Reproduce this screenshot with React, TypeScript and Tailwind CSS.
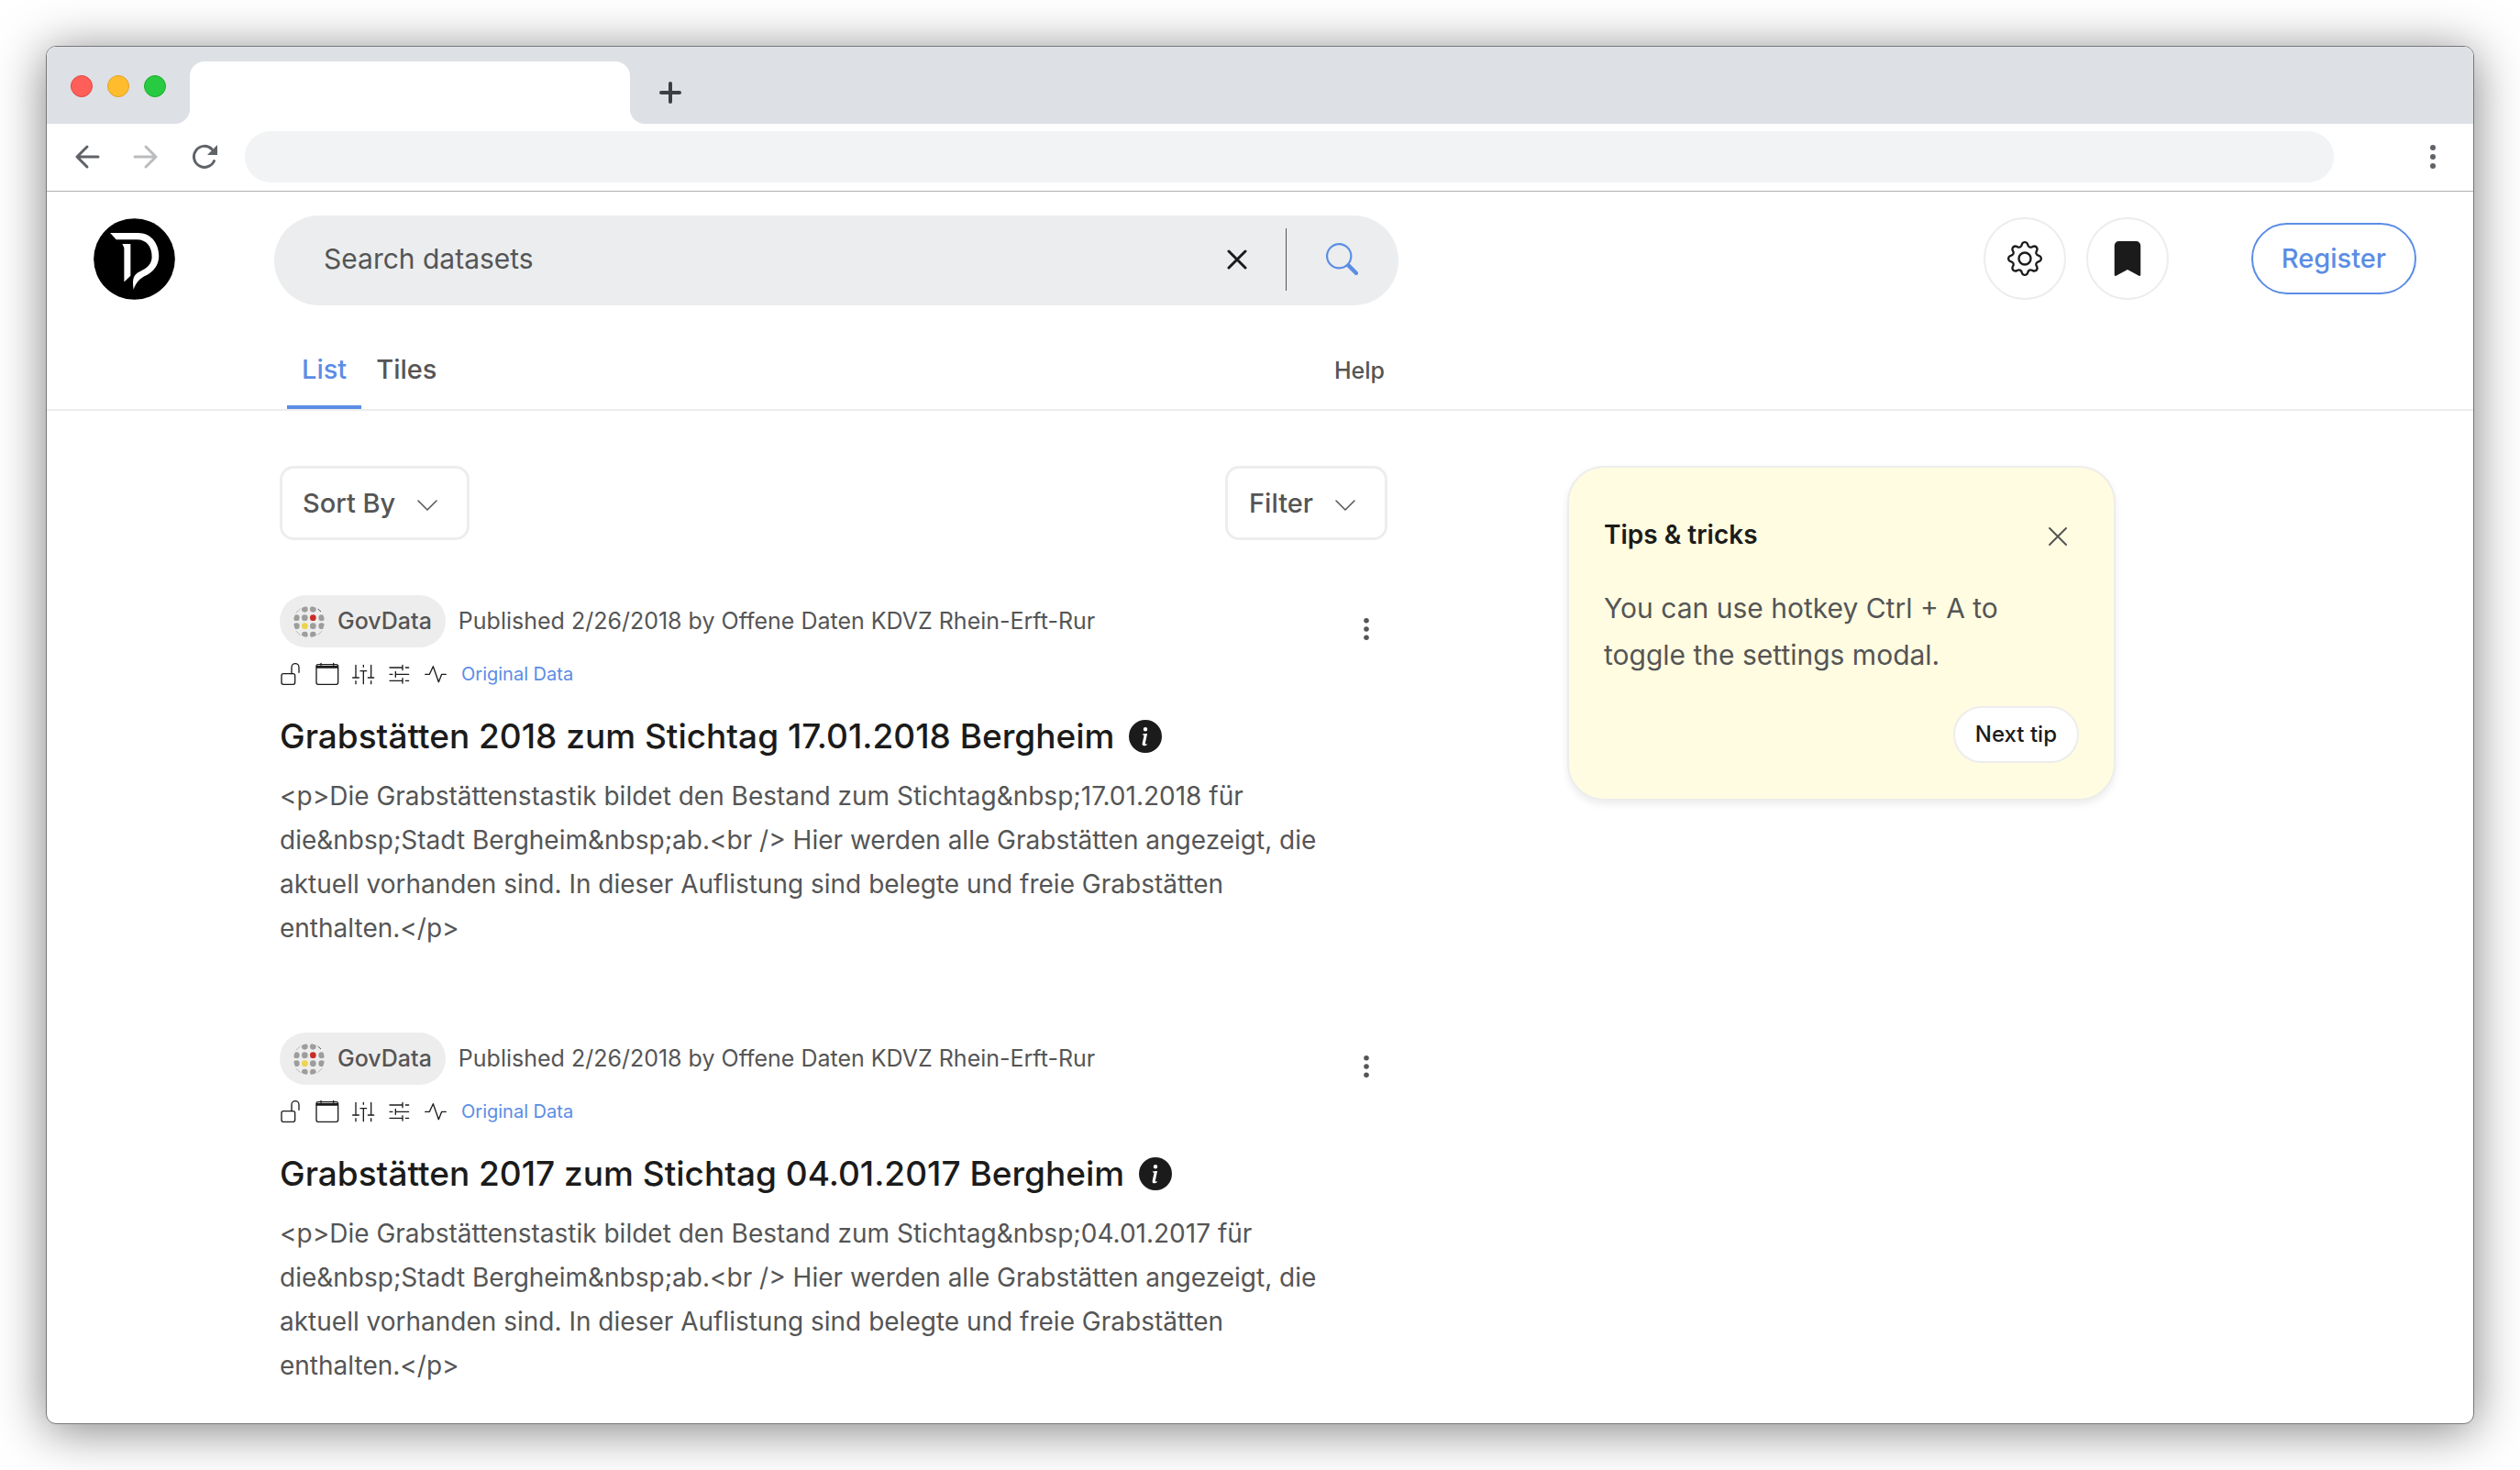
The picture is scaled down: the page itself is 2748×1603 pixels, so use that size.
import type { ReactNode } from "react";
import { BsBookmarkFill, BsGear, BsInfoCircleFill, BsSearch } from "react-icons/bs";

type Dataset = { title: string; date: string };

const datasets: Dataset[] = [
  { title: "Grabstätten 2018 zum Stichtag 17.01.2018 Bergheim", date: "17.01.2018" },
  { title: "Grabstätten 2017 zum Stichtag 04.01.2017 Bergheim", date: "04.01.2017" },
];

function Kebab({ className }: { className: string }) {
  return (
    <svg viewBox="0 0 8 28" className={className} fill="currentColor" aria-hidden="true">
      <circle cx="4" cy="4" r="3" />
      <circle cx="4" cy="14" r="3" />
      <circle cx="4" cy="24" r="3" />
    </svg>
  );
}

function Cross({ className, weight }: { className: string; weight: number }) {
  return (
    <svg viewBox="0 0 22 22" className={className} fill="none" stroke="currentColor" strokeWidth={weight} strokeLinecap="round" aria-hidden="true">
      <path d="M2 2 20 20M20 2 2 20" />
    </svg>
  );
}

function Chevron({ className }: { className: string }) {
  return (
    <svg viewBox="0 0 22 12" className={className} fill="none" stroke="currentColor" strokeWidth="1.5" strokeLinecap="round" strokeLinejoin="round" aria-hidden="true">
      <path d="M1 1 11 11 21 1" />
    </svg>
  );
}

function Logo() {
  return (
    <svg viewBox="66 51 267 268" className="size-[89px]" role="img" aria-label="Home">
      <circle cx="199.5" cy="185" r="133.5" fill="#000" />
      <path
        fill="#fff"
        d="M120 99H212C255 99 281 135 280 177C279 207 262 226 240 238C218 248 206 261 197 285C193 258 194 243 208 232C224 221 257 213 257 177C257 145 240 121 208 121H140Z"
      />
      <path fill="#fff" d="M160 135H187V240L166 260V148Z" />
    </svg>
  );
}

const govDots: [number, number, string][] = [
  [127, 102, "#9d9d9c"],
  [154, 102, "#9d9d9c"],
  [100, 130, "#9d9d9c"],
  [127, 130, "#9d9d9c"],
  [154, 130, "#cb2c26"],
  [182, 130, "#9d9d9c"],
  [100, 157, "#9d9d9c"],
  [127, 157, "#ecd44c"],
  [154, 157, "#9d9d9c"],
  [182, 157, "#9d9d9c"],
  [127, 185, "#9d9d9c"],
  [154, 185, "#9d9d9c"],
];

function GovDataMark() {
  return (
    <svg viewBox="90 92 102 102" className="size-[34px]" aria-hidden="true">
      <clipPath id="gov-clip">
        <circle cx="141" cy="143" r="51" />
      </clipPath>
      <g clipPath="url(#gov-clip)">
        {govDots.map(([x, y, fill]) => (
          <circle key={`${x}-${y}`} cx={x} cy={y} r="10" fill={fill} />
        ))}
      </g>
      <g fill="none" stroke="#9d9d9c" strokeWidth="2">
        <path d="M98 114 113 100M98 173 113 187M184 173 169 187" />
        <path d="M170 101 180 110" stroke="#555" strokeWidth="3" />
      </g>
    </svg>
  );
}

function MetaIcon({ box, label, children }: { box: string; label: string; children: ReactNode }) {
  return (
    <svg viewBox={box} className="size-[26px]" fill="none" stroke="currentColor" strokeWidth="4" strokeLinecap="round" strokeLinejoin="round" role="img" aria-label={label}>
      {children}
    </svg>
  );
}

function MetaIcons() {
  return (
    <>
      <MetaIcon box="45 273 78 78" label="Open licence">
        <rect x="51" y="311" width="44" height="35" rx="6" />
        <path d="M84 311V290a12 12 0 0 1 24 0V307" />
      </MetaIcon>
      <MetaIcon box="161 273 78 78" label="Date">
        <rect x="164" y="281" width="71" height="65" rx="6" />
        <path d="M165 287H234V291H165ZM179 277V283M220 277V283" />
      </MetaIcon>
      <MetaIcon box="279 273 78 78" label="Parameters">
        <path d="M294 283V323M284 324H304M294 335V344M319 283V289M309 302H329M319 303V344M344 283V323M334 324H353M344 335V344" />
      </MetaIcon>
      <MetaIcon box="396 273 78 78" label="Format">
        <path d="M405 291H446M447 283V299M457 291H467M405 313H414M424 304V322M425 313H467M405 334H446M447 326V342M457 334H467" />
      </MetaIcon>
      <MetaIcon box="513 273 78 78" label="Activity">
        <path d="M521 313H535L547 287 565 338 575 313H589" />
      </MetaIcon>
    </>
  );
}

function BrowserChrome() {
  return (
    <div>
      <div className="flex h-[84px] bg-white">
        <div className="flex w-[156px] items-center gap-4 rounded-br-2xl bg-[#dde0e5] pt-0.5 pl-[26px]">
          <span className="size-6 rounded-full border border-[#e2463f] bg-[#ff5f58]" />
          <span className="size-6 rounded-full border border-[#e0a123] bg-[#ffbd2e]" />
          <span className="size-6 rounded-full border border-[#1dad2b] bg-[#28ca41]" />
        </div>
        <div className="w-[480px] bg-[linear-gradient(to_bottom,#dde0e5_50%,#fff_50%)] pt-4">
          <div className="h-full rounded-t-2xl bg-white" />
        </div>
        <div className="flex flex-1 items-center rounded-bl-2xl bg-[#dde0e5] pt-4 pl-8">
          <button type="button" aria-label="New tab" className="text-[#3c4043]">
            <svg viewBox="0 0 24 24" className="size-6" fill="none" stroke="currentColor" strokeWidth="4" strokeLinecap="round">
              <path d="M12 2V22M2 12H22" />
            </svg>
          </button>
        </div>
      </div>
      <div className="flex h-[74px] items-center border-b border-[#b0b0b0] bg-white pr-10 pb-0.5 pl-[30px] text-[#5f6368]">
        <button type="button" aria-label="Back">
          <svg viewBox="0 0 28 28" className="size-7" fill="none" stroke="currentColor" strokeWidth="3" strokeLinecap="round" strokeLinejoin="round">
            <path d="M26 14H3M14 3 3 14 14 25" />
          </svg>
        </button>
        <button type="button" aria-label="Forward" className="ml-9 text-[#babcbe]">
          <svg viewBox="0 0 28 28" className="size-7" fill="none" stroke="currentColor" strokeWidth="3" strokeLinecap="round" strokeLinejoin="round">
            <path d="M2 14H25M14 3 25 14 14 25" />
          </svg>
        </button>
        <button type="button" aria-label="Reload" className="ml-9">
          <svg viewBox="0 0 28 28" className="size-7" fill="none" stroke="currentColor" strokeWidth="3">
            <path d="M24.500 18.500A11.500 11.500 0 1 1 22 5.600" strokeLinecap="round" />
            <path d="M28 1V12H17Z" fill="currentColor" stroke="none" />
          </svg>
        </button>
        <input type="text" aria-label="Address" className="ml-[30px] h-14 min-w-0 flex-1 rounded-full bg-[#f1f3f4] px-8 text-2xl outline-none" />
        <button type="button" aria-label="Browser menu" className="ml-[104px]">
          <Kebab className="h-7 w-2" />
        </button>
      </div>
    </div>
  );
}

function Header() {
  return (
    <header className="border-b-2 border-[#ededed] pt-[26px]">
      <div className="flex items-start pr-[62px] pl-[51px]">
        <a href="#home" className="mr-[108px] flex h-[94px] shrink-0 items-center">
          <Logo />
        </a>
        <form className="flex h-[98px] max-w-[1226px] flex-1 items-center rounded-full bg-[#ebedef] pr-11 pb-[3px] pl-[54px]">
          <input type="text" aria-label="Search datasets" placeholder="Search datasets" className="min-w-0 flex-1 bg-transparent text-[30px] outline-none placeholder:text-[#555555]" />
          <button type="button" aria-label="Clear search" className="mr-[42px] text-[#1b1b1b]">
            <Cross className="size-[22px]" weight={3} />
          </button>
          <span className="h-[68px] w-px bg-[#555555]" />
          <button type="submit" aria-label="Search" className="ml-[43px] text-[#5b8de5]">
            <BsSearch className="size-[35px]" />
          </button>
        </form>
        <div className="ml-auto flex h-[94px] items-center">
          <button type="button" aria-label="Settings" className="flex size-[90px] items-center justify-center rounded-full border-2 border-[#ededed] text-[#1b1b1b]">
            <BsGear className="size-[38px]" />
          </button>
          <button type="button" aria-label="Bookmarks" className="ml-[22px] flex size-[90px] items-center justify-center rounded-full border-2 border-[#ededed] text-[#1b1b1b]">
            <BsBookmarkFill className="size-[38px]" />
          </button>
          <button type="button" className="ml-[90px] h-[78px] rounded-full border-2 border-[#5b8de5] px-[31px] text-[29px] font-medium text-[#5b8de5]">
            Register
          </button>
        </div>
      </div>
      <nav className="mt-[27px] flex h-[86px] max-w-[1463px] items-stretch pl-[262px] text-[29px] font-medium text-[#555555]">
        <a href="#list" className="flex items-center border-b-4 border-[#5b8de5] px-4 pt-1 text-[#5b8de5]">
          List
        </a>
        <a href="#tiles" className="flex items-center border-b-4 border-transparent px-4 pt-1">
          Tiles
        </a>
        <a href="#help" className="ml-auto flex items-center px-1 pt-1 text-[25px]">
          Help
        </a>
      </nav>
    </header>
  );
}

function DatasetCard({ title, date }: Dataset) {
  return (
    <article>
      <div className="flex items-center">
        <span className="flex h-[57px] items-center gap-[14px] rounded-full bg-[#ededed] px-[15px] text-[25px] font-medium text-[#555555]">
          <GovDataMark />
          GovData
        </span>
        <span className="ml-[14px] text-[25px] text-[#555555]">Published 2/26/2018 by Offene Daten KDVZ Rhein-Erft-Rur</span>
        <button type="button" aria-label="More actions" className="mt-4 mr-[19px] ml-auto text-[#555555]">
          <Kebab className="h-[26px] w-2" />
        </button>
      </div>
      <div className="mt-[14px] flex h-[30px] items-center gap-[13px] text-[#1b1b1b]">
        <MetaIcons />
        <a href="#original" className="ml-[3px] text-[20px] text-[#5b8de5]">
          Original Data
        </a>
      </div>
      <h2 className="mt-[29px] flex items-center gap-4 text-[37px] leading-[48px] font-medium text-[#1b1b1b]">
        {title}
        <BsInfoCircleFill className="size-9" />
      </h2>
      <p className="mt-[17px] max-w-[1160px] text-[28px] leading-[48px] text-[#555555]">
        {`<p>Die Grabstättenstastik bildet den Bestand zum Stichtag&nbsp;${date} für die&nbsp;Stadt Bergheim&nbsp;ab.<br /> Hier werden alle Grabstätten angezeigt, die aktuell vorhanden sind. In dieser Auflistung sind belegte und freie Grabstätten enthalten.</p>`}
      </p>
    </article>
  );
}

function Tips() {
  return (
    <aside className="w-[598px] shrink-0 rounded-[40px] border-2 border-[#ededed] bg-[#fffce1] px-[38px] pt-[49px] pb-[39px] shadow-[0_4px_8px_rgba(0,0,0,0.08)]">
      <div className="flex items-center justify-between pr-3">
        <h3 className="text-[28px] leading-[48px] font-semibold text-[#1b1b1b]">Tips &amp; tricks</h3>
        <button type="button" aria-label="Close tips" className="mt-1 text-[#555555]">
          <Cross className="size-[22px]" weight={2} />
        </button>
      </div>
      <p className="mt-[31px] text-[30px] leading-[51px] text-[#555555]">You can use hotkey Ctrl + A to toggle the settings modal.</p>
      <div className="mt-[30px] flex justify-end">
        <button type="button" className="h-[62px] rounded-full border-2 border-[#ededed] bg-white px-[22px] text-[24px] font-medium text-[#1b1b1b]">
          Next tip
        </button>
      </div>
    </aside>
  );
}

export default function App() {
  return (
    <div className="flex min-h-screen bg-white p-[50px] font-['Inter',sans-serif]">
      <div className="flex-1 overflow-hidden rounded-[11px] border border-[#77787a] bg-white shadow-[0_6px_54px_rgba(0,0,0,0.5)]">
        <BrowserChrome />
        <Header />
        <main className="flex items-start gap-[196px] pt-[60px] pr-8 pl-[254px]">
          <section className="max-w-[1208px] flex-1">
            <div className="flex justify-between text-[29px] font-medium text-[#555555]">
              <label className="relative flex items-center">
                <select aria-label="Sort by" className="h-[81px] appearance-none rounded-[15px] border-3 border-[#ededed] bg-white pr-[77px] pl-[22px] outline-none">
                  <option>Sort By</option>
                </select>
                <Chevron className="pointer-events-none absolute right-[35px] mt-1 h-3 w-[22px]" />
              </label>
              <button type="button" className="flex h-[81px] items-center gap-6 rounded-[15px] border-3 border-[#ededed] pr-8 pl-[23px]">
                Filter
                <Chevron className="mt-1 h-3 w-[22px]" />
              </button>
            </div>
            <div className="mt-[60px] flex flex-col gap-[90px]">
              {datasets.map((dataset) => (
                <DatasetCard key={dataset.title} {...dataset} />
              ))}
            </div>
          </section>
          <Tips />
        </main>
      </div>
    </div>
  );
}
